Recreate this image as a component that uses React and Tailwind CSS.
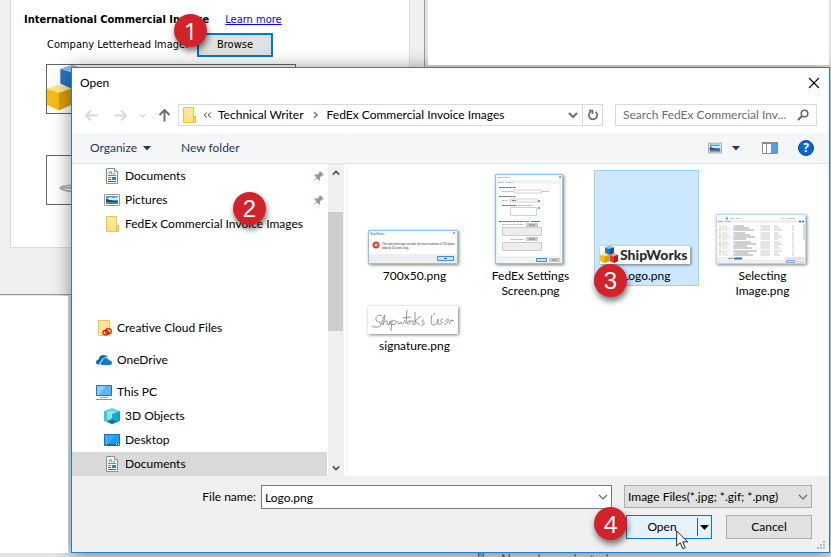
import React from "react";
import clsx from "clsx";

const Badge = ({ n, className }) => (
  <span
    className={clsx(
      "pointer-events-none absolute z-20 flex size-[33px] items-center justify-center rounded-full bg-[#d2232a] text-2xl text-white shadow-[1px_4px_6px_rgba(0,0,0,0.55)]",
      n === 1 || n === 4 ? "font-['Open_Sans',sans-serif]" : "font-['Liberation_Sans',sans-serif]",
      className
    )}
  >
    {n}
  </span>
);

/* ---------- Icons ---------- */

const FolderIcon = () => (
  <svg className="shrink-0" width="16" height="16" viewBox="0 0 16 16">
    <path d="M2.500 .5h10v15h-10z" fill="#ffe796" stroke="#e9c64d" />
    <path d="M12.500 9.500h2v6h-2z" fill="#ffe48a" stroke="#e5bb35" />
    <path d="M3 15V3l7 12z" fill="#ffdf80" opacity=".6" />
  </svg>
);

const CreativeCloudIcon = () => (
  <svg width="16" height="16" viewBox="0 0 16 16">
    <path d="M2.500 .5h11v15h-11z" fill="#ffe796" stroke="#e9c64d" />
    <ellipse cx="9.700" cy="12.600" rx="3" ry="2.300" fill="none" stroke="#e0140c" strokeWidth="1.200" />
    <ellipse cx="12.400" cy="11.200" rx="2.900" ry="2.500" fill="none" stroke="#e0140c" strokeWidth="1.200" />
    <path d="M9.500 11l3.500 2.500" stroke="#e0140c" />
  </svg>
);

const DocumentIcon = () => (
  <svg width="16" height="16" viewBox="0 0 16 16">
    <path d="M2.500 .5h8l3 3v12h-11z" fill="#fff" stroke="#8c8c8c" />
    <path d="M10.500 .5v3h3" fill="#e8e8e8" stroke="#8c8c8c" />
    <path d="M5 6l1.500-3L8 6M9 5.500h2M4 7.500h8M4 9.500h3" stroke="#2a94d4" fill="none" />
    <path d="M4 11.500h3M4 13.500h8" stroke="#4b6378" />
    <path d="M8 9h4v3H8z" fill="#3c7f9d" />
  </svg>
);

const PictureIcon = ({ size = 16 }) => (
  <svg width={size} height={size} viewBox="0 0 16 16">
    <path d="M.5 2.500h15v11H.5z" fill="#fff" stroke="#999" />
    <path d="M2 4h12v8H2z" fill="#4a93e6" />
    <path d="M2 7l4-2 3 1 5-1v3H2z" fill="#d6ebfa" />
    <path d="M2 7c3 0 4 2 12 2v1H2z" fill="#1f4f4a" />
    <path d="M2 10h12v2H2z" fill="#4a7fa6" />
  </svg>
);

const OneDriveIcon = () => (
  <svg width="16" height="16" viewBox="0 0 16 16">
    <path d="M0 10.500C0 8.500 1.300 7.500 2.500 7.400 3 4.500 5.300 3 7.500 3c2 0 3.600 1 4.300 2.500C8 4.800 5.500 7 5.300 9 3.700 9.500 3.300 11 3.800 12.500H2.500C1 12.500 0 11.800 0 10.500z" fill="#0a68c4" />
    <path d="M4.500 11.300c0-1.300.9-2 1.900-2.100C6.600 7.200 8 6 9.700 6c1.600 0 2.700.9 3.200 2.200 1.900 0 3.100 1 3.100 2.500 0 1.400-1.100 2.300-2.500 2.300H6.300c-1.100 0-1.800-.7-1.800-1.700z" fill="#0a78d7" />
  </svg>
);

const PcIcon = () => (
  <svg width="16" height="16" viewBox="0 0 16 16">
    <path d="M.5 1.500h15v10H.5z" fill="#58b7f5" stroke="#3b6e96" />
    <path d="M1 2h9L3 11H1z" fill="#86cdfb" />
    <path d="M4 13.500h8" stroke="#9badbd" />
    <path d="M0 15.500h16" stroke="#8096ab" />
  </svg>
);

const CubeIcon = () => (
  <svg width="16" height="16" viewBox="0 0 16 16">
    <path d="M0 3l8-3 8 3-8 3z" fill="#5fd3de" />
    <path d="M0 3l8 3v10l-8-3z" fill="#3fc4d3" />
    <path d="M16 3L8 6v10l8-3z" fill="#0fa2c4" />
    <path d="M3 4l5-1 5 1v8l-5-2-5 2z" fill="#a7eef0" opacity=".75" />
    <path d="M8 6l5-2v8l-5-1z" fill="#16acc9" />
    <path d="M3 14l5-3 5 3-5 2z" fill="#0c7a8c" />
  </svg>
);

const DesktopIcon = () => (
  <svg width="16" height="16" viewBox="0 0 16 16">
    <path d="M.5 2.500h15v11H.5z" fill="#1b9cfb" stroke="#0e6fbb" />
    <path d="M1 3h10L4 12H1z" fill="#38abff" />
    <path d="M1 12.500h14" stroke="#0b65aa" />
    <path d="M2 12.500h1M12 12.500h1M14 12.500h1" stroke="#fff" />
  </svg>
);

const PinIcon = () => (
  <svg width="12" height="12" viewBox="0 0 12 12">
    <path d="M7 1l4 4-1.200.6-.8-.1-2 2 .2 2-1 1L4 8.500 1 11l-.3-.2L3.500 7.500 1.300 5.300l1-1 2.200.2 2-2-.2-.7z" fill="#8d9aa3" />
  </svg>
);

const Chevron = ({ up, color = "#666", width = 2, size = 10 }) => (
  <svg width={size} height={size} viewBox="0 0 10 10" fill="none" stroke={color} strokeWidth={width}>
    <path d={up ? "M1 7l4-4 4 4" : "M1 3l4 4 4-4"} />
  </svg>
);

const Caret = ({ color = "#1e3c5f" }) => (
  <svg width="8" height="5" viewBox="0 0 8 5">
    <path d="M0 0h8L4 4.500z" fill={color} />
  </svg>
);

const ArrowIcon = ({ className, color }) => (
  <svg className={className} width="13" height="13" viewBox="0 0 13 13" fill="none" stroke={color} strokeWidth="2">
    <path d="M12.500 6.500H1M6 1.500l-5 5 5 5" />
  </svg>
);

const Boxes = ({ size }) => (
  <svg className="shrink-0" width={size} height={size} viewBox="0 0 18 18">
    <path d="M5 1.500L9.500 0 14 1.500v5.500L9.500 9 5 7z" fill="#2f74c0" />
    <path d="M5 1.500L9.500 0 14 1.500 9.500 3z" fill="#8fc0ee" />
    <path d="M9.500 3L14 1.500V7L9.500 9z" fill="#1d5299" />
    <path d="M0 9l4.500-1.500L9 9v6l-4.500 2L0 15z" fill="#f4bd17" />
    <path d="M0 9l4.500-1.500L9 9l-4.500 1.500z" fill="#ffe68a" />
    <path d="M4.500 10.500L9 9v6l-4.500 2z" fill="#dd9c06" />
    <path d="M9.500 9L14 7.500 18 9v6l-4 2-4.500-2z" fill="#e23a34" />
    <path d="M9.500 9L14 7.500 18 9l-4 1.500z" fill="#f79a92" />
    <path d="M14 10.500L18 9v6l-4 2z" fill="#b81b1b" />
  </svg>
);

/* ---------- Thumbnails ---------- */

const ErrorThumb = () => (
  <svg width="90" height="34" viewBox="0 0 90 34" className="bg-white" fontFamily="Liberation Sans, sans-serif">
    <path d="M0 24h90v10H0z" fill="#eee" />
    <path d="M.5.500h89v33H.5z" fill="none" stroke="#8cc3ea" />
    <text x="2" y="5" fontSize="3" fill="#555">ShipWorks</text>
    <path d="M85 2l2 2m0-2l-2 2" stroke="#666" strokeWidth=".6" />
    <circle cx="8" cy="15" r="3.500" fill="#e8402a" />
    <path d="M6.500 13.500l3 3m0-3l-3 3" stroke="#fff" />
    <text x="14" y="15" fontSize="2.700" fill="#333">The selected image exceeds the max resolution of 700 pixels</text>
    <text x="14" y="18.500" fontSize="2.700" fill="#333">wide by 50 pixels long.</text>
    <path d="M69.500 26.500h16v4h-16z" fill="#ddd" stroke="#3f8fce" />
    <path d="M76 28.500h3" stroke="#555" />
  </svg>
);

// form screenshot at thumbnail scale, captions are too small to read
const SettingsThumb = () => (
  <svg width="68" height="90" viewBox="0 0 68 90" className="bg-[#f3f3f3]">
    <path d="M0 0h68v6H0z" fill="#fff" />
    <path d="M2 9h63v74H2z" fill="#fff" stroke="#ddd" strokeWidth=".5" />
    <path d="M.5.500h67v89H.5z" fill="none" stroke="#8cc3ea" />
    <path d="M64 2l2 2m0-2l-2 2" stroke="#666" strokeWidth=".6" />
    <g stroke="#bbb" strokeDasharray="2.500 .5">
      <path d="M2 3.500h13M3 8.500h6M11 8.500h7M7 17.500h11M47 17.500h7M7 26.500h6M23 31.500h15M7 50.500h22M16 65.500h13" />
    </g>
    <g stroke="#777" strokeDasharray="3 .4">
      <path d="M4 13.500h17M4 22.500h17M7 31.500h15M4 47.500h30" />
    </g>
    <path d="M36 47.500h9" stroke="#66f" />
    <g fill="#fff" stroke="#bbb" strokeWidth=".7">
      <path d="M19.500 16h27v3h-27zM15.500 25h27v3h-27zM15.500 33.500h26v8h-26z" />
      <path d="M7.500 53.500h39v8h-39zM7.500 68.500h39v8h-39z" fill="#ededed" />
    </g>
    <path d="M31 49h12v4H31zM31 63h12v4H31zM54 84h11v4H54z" fill="#ccc" />
    <path d="M34 51h6M34 65h6M57 86h5M17 26.500h4" stroke="#777" strokeWidth=".9" />
    <path d="M43 26h2v2h-2zM43 33h2v2h-2z" fill="#6aa7d9" />
    <path d="M41.500 84.500h10v3h-10z" fill="#ddd" stroke="#3f8fce" />
  </svg>
);

const LogoThumb = () => (
  <span className="flex h-[18px] w-[90px] items-center justify-between bg-white pr-0.5">
    <Boxes size={18} />
    <span className="text-sm leading-[18px] font-black text-[#2d2d2d]">ShipWorks</span>
  </span>
);

const rowYs = [12, 14, 16, 19, 21, 23, 25, 28, 30, 32, 34, 37, 39, 41];

const ExplorerThumb = () => (
  <svg width="90" height="50" viewBox="0 0 90 50" className="bg-white">
    <path d="M0 6h90v3H0zM0 43h90v7H0z" fill="#eef0f3" />
    <path d="M2 7.500h5M9 7.500h6" stroke="#8aa0b8" strokeWidth=".7" />
    <path d="M10 4.500h2" stroke="#3fa9ea" strokeWidth="2" />
    <path d="M14 4.500h4M20 4.500h5M65 4.500h3M70 4.500h9" stroke="#bbb" strokeWidth=".8" />
    <path d="M83 7.500h2M86 7.500h2" stroke="#2568b5" strokeWidth="1.500" />
    <path d="M13.500 9v34M44.500 9v34" stroke="#e5e5e5" strokeWidth=".6" />
    {rowYs.map((y, i) => (
      <g key={y}>
        <path d={`M3 ${y}h2`} stroke={i % 3 === 2 ? "#5db5ef" : "#f3cf6a"} strokeWidth="1.200" />
        <path d={`M6 ${y}h${5 + (i % 3)}`} stroke="#ccc" strokeWidth=".8" />
        <path d={`M17 ${y}h2`} stroke={i % 4 === 0 ? "#f3cf6a" : "#7fbdec"} strokeWidth="1.200" />
        <path d={`M19 ${y}h${9 + ((i * 5) % 14)}`} stroke="#888" strokeWidth=".8" />
        <path d={`M45 ${y}h9M58 ${y}h${4 + (i % 3) * 2}M76 ${y}h2`} stroke="#bbb" strokeWidth=".8" />
      </g>
    ))}
    <path d="M88 10v16" stroke="#ccc" strokeWidth="1.500" />
    <path d="M12 44.500h5" stroke="#888" strokeWidth=".8" />
    <path d="M18 44.500h8" stroke="#1d78d0" strokeWidth="2" />
    <path d="M26 43.500h42v2H26z" fill="#fff" />
    <path d="M70 43.500h18v2H70zM80 47h8v2h-8z" fill="#ddd" />
    <path d="M70.500 46.500h8v2h-8z" fill="#dcecf8" stroke="#3f8fce" strokeWidth=".7" />
    <path d="M.5.500h89v49H.5z" fill="none" stroke="#9ccbec" strokeWidth=".7" />
  </svg>
);

const SignatureThumb = () => (
  <svg width="90" height="28" viewBox="0 0 90 28" className="bg-white" fill="none" stroke="#777" strokeWidth=".8">
    <path d="M14 10c-3-2-7 1-6 4 1 2 6 2 5 5-1 2-6 3-9 1M13 18c2-4 3-9 4-9 0 3-2 9-2 10 1-3 3-5 4-4s-1 4 1 4c2-1 2-4 2-4v4M24 14l-1 11M24 16c2-3 5-2 4 1-1 2-3 2-4 1M30 15c0 4 1 4 3 1 0 3 2 3 4-2M39 4l-1 14M35 12l8-1M41 15c-3 1-2 4 0 3s1-3 0-3c2 1 4-1 4 0v4M47 6v13M53 10l-6 5 5 4M56 14c-3 0-2 3 0 3s-1 3-3 2" />
    <path d="M64 9c-1 5-2 11 2 10 3-1 4-4 4-6v6M66 7l1 2M75 13c-3 0-3 3-1 3 1 1 0 3-3 2M77 16c1-3 5-4 3-1-1 4-3 3-4 3M81 18l2-4 3 1" />
  </svg>
);

/* ---------- Data ---------- */

const quickItems = [
  { label: "Documents", icon: DocumentIcon, pinned: true },
  { label: "Pictures", icon: PictureIcon, pinned: true },
  { label: "FedEx Commercial Invoice Images", icon: FolderIcon, badge: 2 },
];

const pcItems = [
  { label: "3D Objects", icon: CubeIcon },
  { label: "Desktop", icon: DesktopIcon },
  { label: "Documents", icon: DocumentIcon, active: true },
];

const files = [
  { name: "700x50.png", thumb: ErrorThumb },
  { name: "FedEx Settings Screen.png", thumb: SettingsThumb },
  { name: "Logo.png", thumb: LogoThumb, selected: true },
  { name: "Selecting Image.png", thumb: ExplorerThumb },
];

const TreeItem = ({ item, root }) => {
  const Icon = item.icon;
  return (
    <li className="relative">
      <button
        className={clsx(
          "flex h-6 w-full items-center gap-1 pr-0.5 text-left whitespace-nowrap",
          root ? "pl-6" : "pl-8",
          item.active && "bg-[#d9d9d9]"
        )}
      >
        <Icon />
        <span className="flex-1 pl-px">{item.label}</span>
        {item.pinned && <PinIcon />}
      </button>
      {item.badge && <Badge n={item.badge} className="-top-5 left-[161px]" />}
    </li>
  );
};

const FileTile = ({ file, short }) => {
  const Thumb = file.thumb;
  return (
    <button
      className={clsx(
        "relative flex w-[105px] flex-col items-center self-start border pb-0.5 leading-[15px]",
        file.selected ? "border-[#99d1ff] bg-[#cce8ff]" : "border-transparent"
      )}
    >
      <span className={clsx("mr-1 flex items-end", short ? "h-7" : "h-[93px]")}>
        <span className="block shadow-[1px_1px_3px_rgba(0,0,0,0.5)] [&>svg]:block">
          <Thumb />
        </span>
      </span>
      <span className="mt-1 block w-[92px]">{file.name}</span>
      {file.selected && <Badge n={3} className="top-[93px] -left-px" />}
    </button>
  );
};

/* ---------- Windows ---------- */

const SettingsWindow = () => (
  <section className="absolute top-0 left-0 w-[425px] border-r border-b border-[#9a9a9a] bg-[#f0f0f0] px-[10px] pb-[46px] font-['DejaVu_Sans_Condensed','DejaVu_Sans',sans-serif] text-[11px]">
    <div className="mr-1 h-[248px] border-x border-b border-[#dcdcdc] bg-white pt-3 pl-[13px]">
      <div className="flex h-4 items-center gap-4 whitespace-nowrap">
        <h2 className="font-bold">International Commercial Invoice</h2>
        <a href="#learn" className="text-[#0000ff] underline">Learn more</a>
      </div>
      <div className="mt-[5px] flex items-center pl-[23px]">
        <span className="w-[150px] whitespace-nowrap">Company Letterhead Image:</span>
        <div className="relative">
          <button className="h-6 w-[76px] border-2 border-[#0078d7] bg-[#e1e1e1]">Browse</button>
          <Badge n={1} className="-top-[19px] -left-[23px]" />
        </div>
      </div>
      <div className="mt-[7px] ml-[22px] h-[50px] w-[250px] overflow-hidden border border-[#646464]">
        <Boxes size={48} />
      </div>
      <div className="mt-[41px] ml-[22px] h-[50px] w-[250px] border border-[#646464]">
        <svg width="40" height="48" viewBox="0 0 40 48" fill="none" stroke="#aaa" strokeWidth="1.500">
          <path d="M40 29c-14 0-26 0-27 3 2 3 12 4 27 5M13 32c6-1 12 0 20 1" />
        </svg>
      </div>
    </div>
  </section>
);

const OpenDialog = () => (
  <section
    role="dialog"
    aria-label="Open"
    className="absolute top-[67px] right-px left-[71px] z-10 border border-[#1883d7] bg-white shadow-[0_2px_18px_rgba(0,0,0,0.45)]"
  >
    <header className="flex h-[30px] items-center justify-between pr-[9px] pl-2">
      <h1>Open</h1>
      <button aria-label="Close">
        <svg width="12" height="12" viewBox="0 0 12 12" stroke="#000" strokeWidth="1.100">
          <path d="M1 1l10 10M11 1L1 11" />
        </svg>
      </button>
    </header>

    <div className="flex items-center pt-1.5 pr-3 pb-[7px]">
      <div className="flex w-[106px] items-center gap-4 pl-[13px]">
        <button aria-label="Back"><ArrowIcon color="#d9d9d9" /></button>
        <button aria-label="Forward"><ArrowIcon color="#d9d9d9" className="rotate-180" /></button>
        <button aria-label="Recent" className="-mx-1"><Chevron color="#d9d9d9" size={7} /></button>
        <button aria-label="Up"><ArrowIcon color="#6b6b6b" className="rotate-90" /></button>
      </div>
      <nav className="flex h-[22px] flex-1 items-center border border-[#d9d9d9] pl-0.5 whitespace-nowrap">
        <FolderIcon />
        <svg className="mx-1.5" width="9" height="6" viewBox="0 0 9 6" fill="none" stroke="#555">
          <path d="M4 .5L1 3l3 2.500M8 .5L5 3l3 2.500" />
        </svg>
        <button>Technical Writer</button>
        <svg className="mx-[9px]" width="5" height="8" viewBox="0 0 5 8" fill="none" stroke="#777" strokeWidth="1.500">
          <path d="M1 1l3 3-3 3" />
        </svg>
        <button className="flex-1 text-left">FedEx Commercial Invoice Images</button>
        <button aria-label="Previous locations" className="px-1"><Chevron color="#707070" /></button>
        <button aria-label="Refresh" className="flex h-full w-5 items-center justify-center border-l border-[#d9d9d9]">
          <svg width="12" height="12" viewBox="0 0 12 12" fill="none" stroke="#666" strokeWidth="1.600">
            <path d="M4 2.500a4.200 4.200 0 1 0 4.500.3M2 1.500h3.500V5" />
          </svg>
        </button>
      </nav>
      <label className="ml-3 flex h-[22px] w-[202px] items-center border border-[#d9d9d9] px-[7px]">
        <input
          type="text"
          aria-label="Search"
          placeholder="Search FedEx Commercial Inv..."
          className="min-w-0 flex-1 outline-none placeholder:text-[#6d6d6d]"
        />
        <svg className="shrink-0" width="12" height="12" viewBox="0 0 12 12" fill="none" stroke="#666" strokeWidth="1.600">
          <circle cx="7.500" cy="4.500" r="3.300" />
          <path d="M5 7L1 11" strokeWidth="2" />
        </svg>
      </label>
    </div>

    <div className="flex h-[31px] items-center border-b border-[#e3e5e8] bg-[#f5f6f7] pr-[15px] pl-[18px] text-[#1e395b]">
      <button className="flex w-[91px] items-center gap-1.5">Organize <Caret /></button>
      <button>New folder</button>
      <div className="ml-auto flex items-center">
        <button aria-label="Change view"><PictureIcon size={14} /></button>
        <button aria-label="More views" className="mr-[22px] ml-[10px]"><Caret /></button>
        <button aria-label="Preview pane" className="mr-5">
          <svg width="16" height="12" viewBox="0 0 16 12">
            <path d="M.5.500h15v11H.5z" fill="#fff" stroke="#8b8b8b" />
            <path d="M0 0h16v2H0zM4 2h1v9H4z" fill="#8b8b8b" />
            <path d="M9 2h6v9H9z" fill="#45a3ec" />
          </svg>
        </button>
        <button
          aria-label="Help"
          className="flex size-4 items-center justify-center rounded-full border border-[#0a4a94] bg-[#0b66cc] font-['Open_Sans',sans-serif] text-xs leading-none font-bold text-white"
        >
          ?
        </button>
      </div>
    </div>

    <div className="flex h-[312px]">
      <aside className="w-[255px]">
        <ul>
          {quickItems.map((item) => <TreeItem key={item.label} item={item} />)}
        </ul>
        <ul className="mt-20 space-y-2">
          <TreeItem root item={{ label: "Creative Cloud Files", icon: CreativeCloudIcon }} />
          <TreeItem root item={{ label: "OneDrive", icon: OneDriveIcon }} />
          <TreeItem root item={{ label: "This PC", icon: PcIcon }} />
        </ul>
        <ul>
          {pcItems.map((item) => <TreeItem key={item.label} item={item} />)}
        </ul>
      </aside>
      <div className="ml-px flex w-4 flex-col items-center bg-[#f0f0f0] pr-px">
        <span className="flex h-[17px] items-center"><Chevron up color="#505050" size={8} /></span>
        <span className="mt-[31px] h-[119px] w-full bg-[#cdcdcd]" />
        <span className="mt-auto flex h-[17px] items-center"><Chevron color="#505050" size={8} /></span>
      </div>
      <div className="ml-0.5 flex flex-1 flex-wrap content-start gap-x-[11px] gap-y-1 border-l border-[#f0f0f0] pt-1.5 pl-[15px]">
        {files.map((file) => <FileTile key={file.name} file={file} />)}
        <FileTile short file={{ name: "signature.png", thumb: SignatureThumb }} />
      </div>
    </div>

    <footer className="relative bg-[#f0f0f0] pt-[9px] pr-[17px] pb-[13px]">
      <div className="flex">
        <label htmlFor="file-name" className="w-[189px] pr-[5px] text-right leading-6">File name:</label>
        <div className="relative flex-1">
          <input id="file-name" defaultValue="Logo.png" className="h-6 w-full border border-[#7a7a7a] bg-white px-[3px]" />
          <span className="absolute top-[7px] right-1"><Chevron width={1.2} /></span>
        </div>
        <div className="relative ml-3 w-[188px]">
          <select aria-label="File type" className="h-[23px] w-full appearance-none border border-[#adadad] bg-[#e1e1e1] pl-[3px]">
            <option>Image Files(*.jpg; *.gif; *.png)</option>
          </select>
          <span className="pointer-events-none absolute top-[7px] right-1"><Chevron width={1.2} /></span>
        </div>
      </div>
      <div className="mt-1.5 flex justify-end gap-3.5">
        <div className="relative flex h-6 w-[86px] border border-[#0078d7] bg-[#e5f1fb]">
          <button className="flex-1">Open</button>
          <button aria-label="Open options" className="my-0.5 flex w-3.5 items-center justify-center border-l border-[#555]">
            <svg width="9" height="5" viewBox="0 0 9 5"><path d="M0 0h9L4.500 5z" /></svg>
          </button>
          <Badge n={4} className="-top-[9px] -left-[33px]" />
          <svg className="absolute top-3.5 left-[49px]" width="13" height="20" viewBox="0 0 13 20">
            <path d="M.7 1v15l3.500-3.300 2.600 6 2.500-1-2.600-5.800h5z" fill="#fff" stroke="#222" />
          </svg>
        </div>
        <button className="h-6 w-[86px] border border-[#adadad] bg-[#e1e1e1]">Cancel</button>
      </div>
      <svg className="absolute right-[3px] bottom-0.5" width="9" height="9" viewBox="0 0 9 9" fill="#bcbcbc">
        <path d="M6 0h2v2H6zM3 3h2v2H3zM6 3h2v2H6zM0 6h2v2H0zM3 6h2v2H3zM6 6h2v2H6z" />
      </svg>
    </footer>
  </section>
);

export default function App() {
  return (
    <main className="relative h-screen min-h-[557px] overflow-hidden bg-[#e4e4e4] font-['Lato','Open_Sans',sans-serif] text-xs text-black">
      <SettingsWindow />
      <OpenDialog />

      {/* panes of the application behind the two windows */}
      <div className="absolute top-0 right-[2px] left-[428px] z-10 h-[65px] bg-white" />
      <div className="absolute top-[296px] left-0 z-10 h-[257px] w-[68px] bg-white" />
      <div className="absolute bottom-0 left-[478px] h-1 w-1.5 border-x border-[#5f7ea8] bg-[#9ab8e0]" />
      <p className="absolute top-[551px] left-[501px] text-[13px] text-[#666]">No orders selected</p>
    </main>
  );
}
